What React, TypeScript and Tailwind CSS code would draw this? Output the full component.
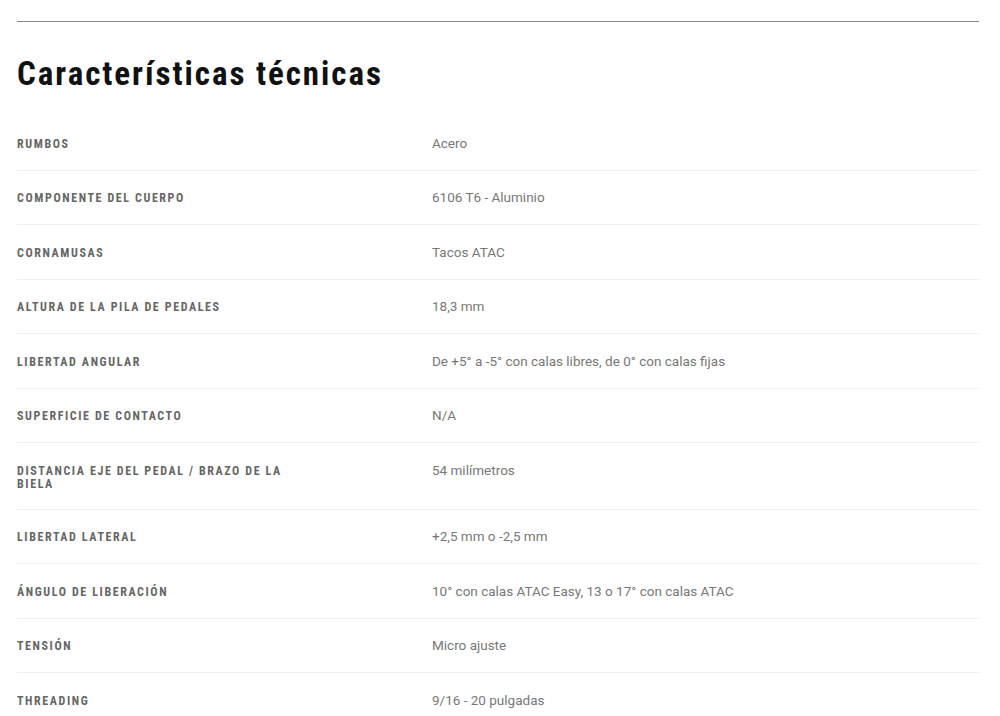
const specs: [string, string][] = [
  ['Rumbos', 'Acero'],
  ['Componente del cuerpo', '6106 T6 - Aluminio'],
  ['Cornamusas', 'Tacos ATAC'],
  ['Altura de la pila de pedales', '18,3 mm'],
  ['Libertad angular', 'De +5° a -5° con calas libres, de 0° con calas fijas'],
  ['Superficie de contacto', 'N/A'],
  ['Distancia eje del pedal / brazo de la biela', '54 milímetros'],
  ['Libertad lateral', '+2,5 mm o -2,5 mm'],
  ['Ángulo de liberación', '10° con calas ATAC Easy, 13 o 17° con calas ATAC'],
  ['Tensión', 'Micro ajuste'],
  ['Threading', '9/16 - 20 pulgadas'],
];

export default function App() {
  return (
    <div className="min-h-[716px] bg-white pl-[17px] pr-[21px] pt-[21px] font-['Roboto',sans-serif]">
      <div className="border-t border-[#8a8a8a]" />
      <h2 className="mt-[32px] text-[33px] font-bold leading-[40px] tracking-[1.95px] text-[#111] font-['Roboto_Condensed',sans-serif]">
        Características técnicas
      </h2>
      <div className="mt-[22px]">
        {specs.map(([label, value], i) => (
          <div
            key={label}
            className={`grid grid-cols-[415px_1fr] items-start py-[19.75px] ${i < specs.length - 1 ? 'border-b border-[#efefef]' : ''}`}
          >
            <div className="max-w-[290px] translate-y-[1.5px] text-[12px] font-bold uppercase leading-[13px] tracking-[1.6px] text-[#666] font-['Roboto_Condensed',sans-serif]">
              {label}
            </div>
            <div className="text-[13.5px] leading-[14px] text-[#777]">{value}</div>
          </div>
        ))}
      </div>
    </div>
  );
}
